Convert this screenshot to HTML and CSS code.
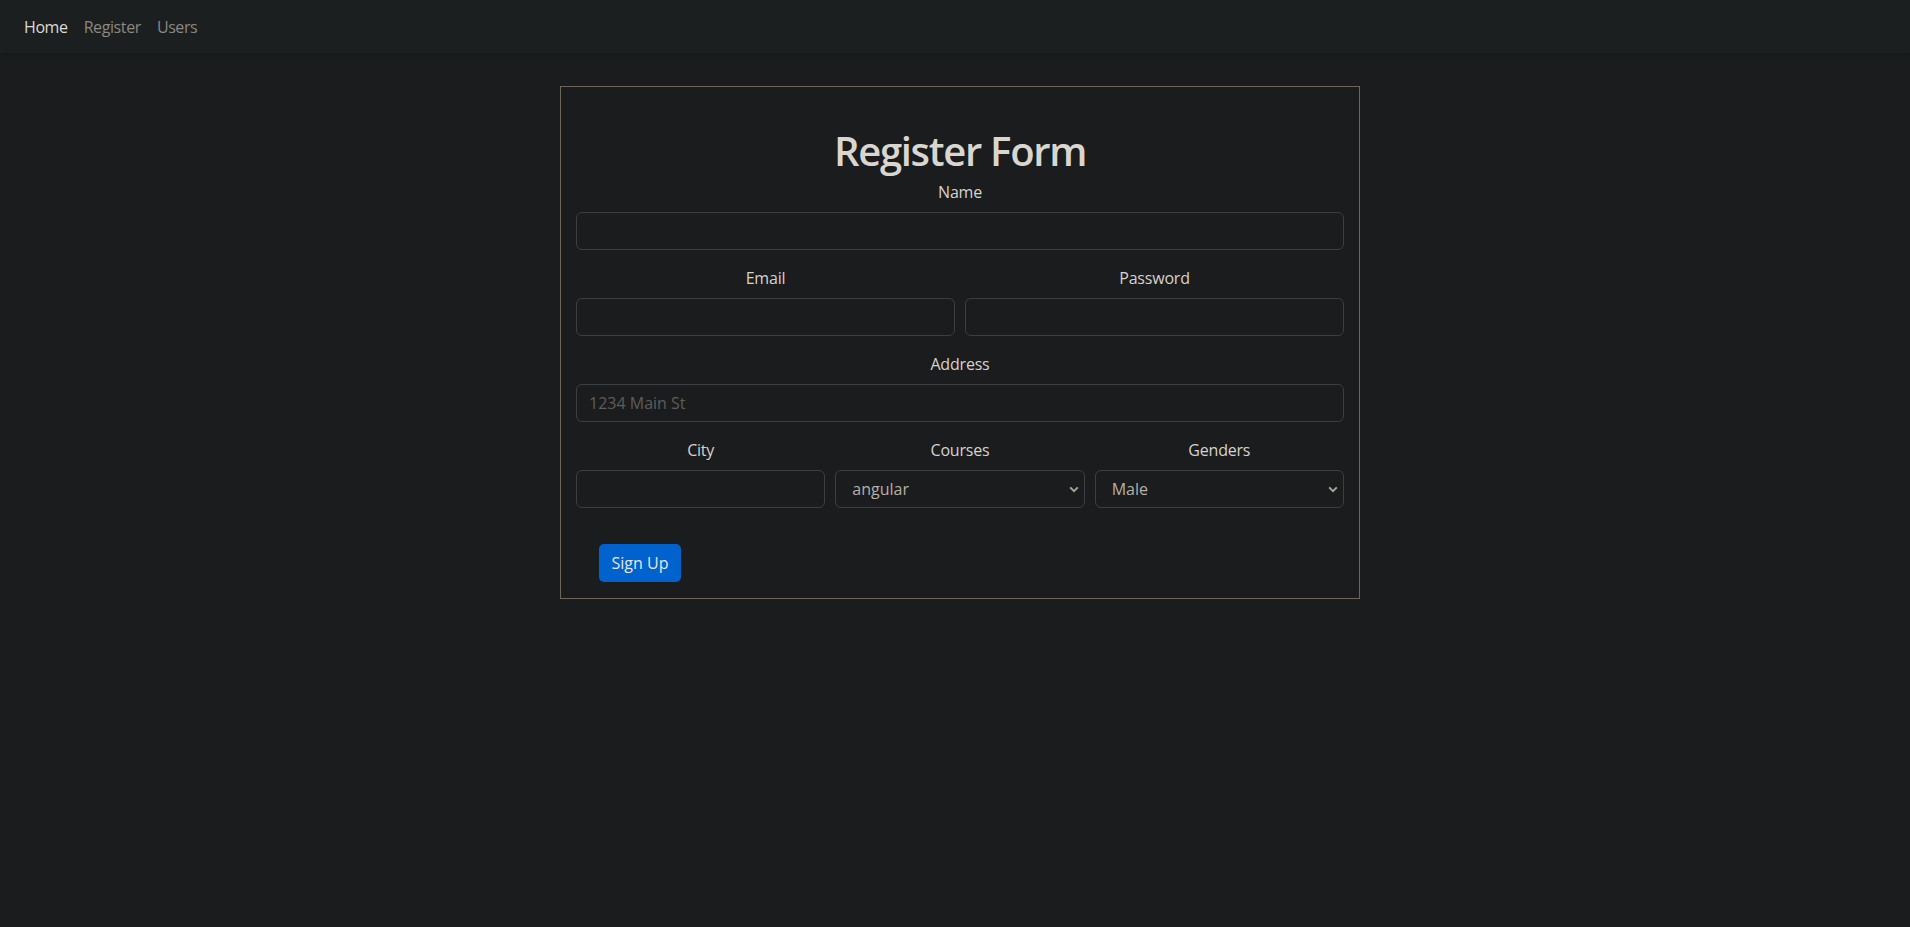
FILE: index.html
```html
<!DOCTYPE html>
<html lang="en">
<head>
  <meta charset="UTF-8" />
  <meta name="viewport" content="width=device-width, initial-scale=1.0"/>
  <title>Register</title>
  <link rel="stylesheet" href="styles.css">
</head>
<body>
  <nav class="navbar">
    <a class="nav-link active" href="#">Home</a>
    <a class="nav-link" href="#">Register</a>
    <a class="nav-link" href="#">Users</a>
  </nav>

  <main class="page">
    <form class="register-box">
      <h1>Register Form</h1>

      <div class="field">
        <label for="name">Name</label>
        <input type="text" id="name">
      </div>

      <div class="row two">
        <div class="field">
          <label for="email">Email</label>
          <input type="email" id="email">
        </div>
        <div class="field">
          <label for="password">Password</label>
          <input type="password" id="password">
        </div>
      </div>

      <div class="field">
        <label for="address">Address</label>
        <input type="text" id="address" placeholder="1234 Main St">
      </div>

      <div class="row three">
        <div class="field">
          <label for="city">City</label>
          <input type="text" id="city">
        </div>
        <div class="field">
          <label for="courses">Courses</label>
          <div class="select-wrap">
            <select id="courses">
              <option>angular</option>
              <option>react</option>
              <option>vue</option>
            </select>
            <svg class="chevron" width="10" height="7" viewBox="0 0 10 7"><path d="M1.2 1.4 L5 5.2 L8.8 1.4" fill="none" stroke="#a8a39b" stroke-width="2"/></svg>
          </div>
        </div>
        <div class="field">
          <label for="genders">Genders</label>
          <div class="select-wrap">
            <select id="genders">
              <option>Male</option>
              <option>Female</option>
            </select>
            <svg class="chevron" width="10" height="7" viewBox="0 0 10 7"><path d="M1.2 1.4 L5 5.2 L8.8 1.4" fill="none" stroke="#a8a39b" stroke-width="2"/></svg>
          </div>
        </div>
      </div>

      <button type="button" class="btn">Sign Up</button>
    </form>
  </main>
</body>
</html>
```

FILE: styles.css
```css
body {
  margin: 0;
  background-color: #1b1c1e;
  color: #d6d2cc;
  font-family: "Segoe UI", "Open Sans", sans-serif;
  font-size: 16px;
  line-height: 24px;
  letter-spacing: -0.2px;
}

.navbar {
  display: flex;
  align-items: center;
  height: 53px;
  padding: 0 16px;
  background-color: #1c1f20;
  box-shadow: 0 2px 6px rgba(0,0,0,0.15);
}

.nav-link {
  padding: 0 8px;
  color: #8b8781;
  text-decoration: none;
  letter-spacing: -0.4px;
}

.nav-link.active {
  color: #dedad5;
}

.page {
  padding: 33px 0 0 10px;
}

.register-box {
  width: 768px;
  margin: 0 auto;
  padding: 40px 15px 16px 15px;
  border: 1px solid #6e6656;
}

h1 {
  margin: 0 0 5px 0;
  text-align: center;
  font-size: 40px;
  line-height: 48px;
  font-weight: 600;
  letter-spacing: -1.3px;
  color: #d9d5cf;
}

.field {
  margin-bottom: 16px;
}

.row .field {
  margin-bottom: 0;
}

.row {
  display: grid;
  gap: 10px;
  margin-bottom: 16px;
}

.row.two {
  grid-template-columns: 1fr 1fr;
}

.row.three {
  grid-template-columns: 1fr 1fr 1fr;
}

label {
  display: block;
  margin-bottom: 8px;
  text-align: center;
  color: #d6d2cc;
}

input, select {
  display: block;
  box-sizing: border-box;
  width: 100%;
  height: 38px;
  padding: 6px 12px;
  border: 1px solid #3c3f42;
  border-radius: 6px;
  background-color: #1b1c1e;
  color: #b6b0a7;
  font-family: inherit;
  font-size: 16px;
}

input::placeholder {
  color: #5e5c58;
}

select {
  appearance: none;
  padding-left: 16px;
}

.select-wrap {
  position: relative;
}

.chevron {
  position: absolute;
  right: 6px;
  top: 16px;
  pointer-events: none;
}

.btn {
  margin: 20px 0 0 23px;
  width: 82px;
  height: 38px;
  padding: 0;
  border: none;
  border-radius: 5px;
  background-color: #0062cd;
  color: #e8e6e3;
  font-family: inherit;
  font-size: 16px;
  cursor: pointer;
}
```
